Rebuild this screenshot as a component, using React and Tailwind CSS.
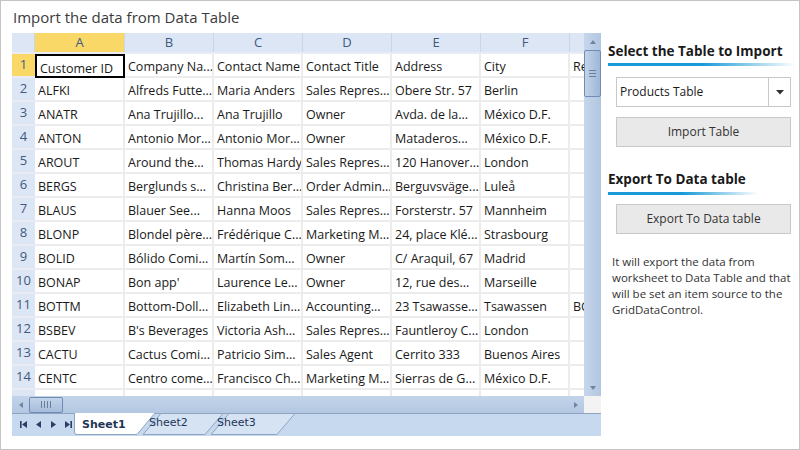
import React from 'react';

const cols = ['A', 'B', 'C', 'D', 'E', 'F'];

const rows = [
  ['Customer ID', 'Company Na...', 'Contact Name', 'Contact Title', 'Address', 'City', 'Re'],
  ['ALFKI', 'Alfreds Futte...', 'Maria Anders', 'Sales Repres...', 'Obere Str. 57', 'Berlin', ''],
  ['ANATR', 'Ana Trujillo...', 'Ana Trujillo', 'Owner', 'Avda. de la...', 'México D.F.', ''],
  ['ANTON', 'Antonio Mor...', 'Antonio Mor...', 'Owner', 'Mataderos...', 'México D.F.', ''],
  ['AROUT', 'Around the...', 'Thomas Hardy', 'Sales Repres...', '120 Hanover...', 'London', ''],
  ['BERGS', 'Berglunds s...', 'Christina Ber...', 'Order Admin...', 'Berguvsväge...', 'Luleå', ''],
  ['BLAUS', 'Blauer See...', 'Hanna Moos', 'Sales Repres...', 'Forsterstr. 57', 'Mannheim', ''],
  ['BLONP', 'Blondel père...', 'Frédérique C...', 'Marketing M...', '24, place Klé...', 'Strasbourg', ''],
  ['BOLID', 'Bólido Comi...', 'Martín Som...', 'Owner', 'C/ Araquil, 67', 'Madrid', ''],
  ['BONAP', "Bon app'", 'Laurence Le...', 'Owner', '12, rue des...', 'Marseille', ''],
  ['BOTTM', 'Bottom-Doll...', 'Elizabeth Lin...', 'Accounting...', '23 Tsawasse...', 'Tsawassen', 'BC'],
  ['BSBEV', "B's Beverages", 'Victoria Ash...', 'Sales Repres...', 'Fauntleroy C...', 'London', ''],
  ['CACTU', 'Cactus Comi...', 'Patricio Sim...', 'Sales Agent', 'Cerrito 333', 'Buenos Aires', ''],
  ['CENTC', 'Centro come...', 'Francisco Ch...', 'Marketing M...', 'Sierras de G...', 'México D.F.', ''],
  ['', '', '', '', '', '', ''],
];

const Tri = ({ dir }) => {
  const d = {
    up: 'M1 5 L4 1 L7 5 Z',
    down: 'M1 1 L4 5 L7 1 Z',
    left: 'M5 1 L1 4 L5 7 Z',
    right: 'M1 1 L5 4 L1 7 Z',
  }[dir];
  const w = dir === 'up' || dir === 'down' ? 8 : 6;
  const h = dir === 'up' || dir === 'down' ? 6 : 8;
  return (
    <svg width={w} height={h} viewBox={`0 0 ${w} ${h}`}>
      <path d={d} fill="#6d84a6" />
    </svg>
  );
};

const NavIcon = ({ type }) => (
  <svg width="9" height="9" viewBox="0 0 9 9">
    {type === 'first' && (<><rect x="1" y="1" width="1.6" height="7" fill="#2a3f63" /><path d="M8 1 L3 4.5 L8 8 Z" fill="#2a3f63" /></>)}
    {type === 'prev' && <path d="M7 1 L2 4.5 L7 8 Z" fill="#2a3f63" />}
    {type === 'next' && <path d="M2 1 L7 4.5 L2 8 Z" fill="#2a3f63" />}
    {type === 'last' && (<><path d="M1 1 L6 4.5 L1 8 Z" fill="#2a3f63" /><rect x="6.4" y="1" width="1.6" height="7" fill="#2a3f63" /></>)}
  </svg>
);

const SheetTab = ({ label, active, width }) => (
  <div className="relative h-[22px] flex items-center" style={{ width }}>
    <svg className="absolute inset-0" width={width + 14} height="22" viewBox={`0 0 ${width + 14} 22`}>
      {active ? (
        <path d={`M0.5 0 L0.5 19 Q0.5 21.5 3 21.5 L${width - 6} 21.5 L${width + 12} 0`} fill="#ffffff" stroke="#8ea4c2" />
      ) : (
        <path d={`M0 21.5 L${width - 6} 21.5 L${width + 12} 0.5 L18 0.5 L0 21.5`} fill="#d6e3f3" stroke="#8ea4c2" />
      )}
    </svg>
    <span className={`relative text-[11px] text-[#1f3556] ${active ? 'font-bold pl-[8px] pt-[3px]' : 'pl-[6px] -mt-[2px]'}`} style={{ fontFamily: '"DejaVu Sans", Verdana, sans-serif' }}>
      {label}
    </span>
  </div>
);

export default function App() {
  return (
    <div className="w-[800px] h-[450px] bg-white border border-[#c4c4c4] box-border overflow-hidden" style={{ fontFamily: '"Open Sans", "Noto Sans", sans-serif' }}>
      <div className="h-[32px] pl-3 pt-[5px] text-[15px] text-[#3b3b3b]">Import the data from Data Table</div>
      <div className="flex">
        {/* spreadsheet */}
        <div className="ml-[11px] w-[589px] shrink-0 flex flex-col">
          <div className="flex h-[363px]">
            <div className="w-[572px] overflow-hidden flex flex-col text-[12.5px] text-[#1a1a1a]">
              {/* column headers */}
              <div className="flex h-[21px] shrink-0 bg-[#dce6f4] border-b-2 border-[#e9edf3] text-[#3f5a80] text-[13px]">
                <div className="w-[23px] shrink-0 border-r border-[#c9d6e8]" />
                {cols.map((c, i) => (
                  <div key={c} className={`shrink-0 flex items-center justify-center border-r border-[#c9d6e8] ${i === 0 ? 'bg-[#fad868] w-[90px]' : 'w-[89px]'}`}>{c}</div>
                ))}
                <div className="w-[20px] shrink-0" />
              </div>
              {rows.map((r, ri) => (
                <div key={ri} className="flex h-[24px] shrink-0">
                  <div className={`w-[23px] shrink-0 text-[#3f5a80] text-[13px] text-center leading-[20px] border-b-2 border-[#e9edf3] ${ri === 0 ? 'bg-[#fad868]' : 'bg-[#dce6f4]'}`}>{ri < 14 ? ri + 1 : ''}</div>
                  {r.map((v, ci) => (
                    <div
                      key={ci}
                      className={`shrink-0 overflow-hidden whitespace-nowrap pl-[3px] pt-[4px] leading-[18px] ${ci === 6 ? 'w-[20px]' : ci === 0 ? 'w-[90px]' : 'w-[89px]'} ${ri === 0 && ci === 0 ? 'border-2 border-black pl-[2px] pt-[2px]' : 'border-b-2 border-r-2 border-[#ececec]'}`}
                    >
                      {v}
                    </div>
                  ))}
                </div>
              ))}
            </div>
            {/* vertical scrollbar */}
            <div className="w-[17px] flex flex-col bg-gradient-to-r from-[#c6d6ec] to-[#b2c6e0]">
              <div className="h-[17px] flex items-center justify-center"><Tri dir="up" /></div>
              <div className="h-[47px] border border-[#6e8cb4] rounded-[2px] bg-gradient-to-r from-[#c3d4ea] to-[#9fb6d6] flex items-center justify-center">
                <div className="flex flex-col gap-[2px]">
                  <div className="w-[7px] h-px bg-[#6a7f9c]" />
                  <div className="w-[7px] h-px bg-[#6a7f9c]" />
                  <div className="w-[7px] h-px bg-[#6a7f9c]" />
                </div>
              </div>
              <div className="flex-1" />
              <div className="h-[17px] flex items-center justify-center"><Tri dir="down" /></div>
            </div>
          </div>
          {/* horizontal scrollbar */}
          <div className="flex h-[17px]">
            <div className="w-[572px] flex items-center bg-gradient-to-b from-[#c3d4ea] to-[#b3c7e1]">
              <div className="w-[17px] flex items-center justify-center"><Tri dir="left" /></div>
              <div className="w-[34px] h-[16px] border border-[#6e8cb4] rounded-[2px] bg-gradient-to-b from-[#c3d4ea] to-[#a6bcda] flex items-center justify-center gap-[2px]">
                <div className="w-px h-[7px] bg-[#6a7f9c]" />
                <div className="w-px h-[7px] bg-[#6a7f9c]" />
                <div className="w-px h-[7px] bg-[#6a7f9c]" />
                <div className="w-px h-[7px] bg-[#6a7f9c]" />
              </div>
              <div className="flex-1" />
              <div className="w-[17px] flex items-center justify-center"><Tri dir="right" /></div>
            </div>
            <div className="w-[17px] bg-[#f3f3f3]" />
          </div>
          {/* sheet tab bar */}
          <div className="h-[23px] bg-[#c6d9ef] border-t border-[#8ea4c2] flex items-start">
            <div className="w-[62px] h-[21px] flex items-center pl-[7px] gap-[6px]">
              <NavIcon type="first" />
              <NavIcon type="prev" />
              <NavIcon type="next" />
              <NavIcon type="last" />
            </div>
            <div className="flex -mt-px">
              <SheetTab label="Sheet1" active width={69} />
              <SheetTab label="Sheet2" width={68} />
              <SheetTab label="Sheet3" width={72} />
            </div>
          </div>
        </div>
        {/* right panel */}
        <div className="w-[198px] shrink-0 pl-[7px]">
          <div className="pt-[9px] text-[13.5px] font-bold text-[#1a1a1a] leading-[18px]">Select the Table to Import</div>
          <div className="mt-[3px] h-[3px] w-[188px] bg-gradient-to-r from-[#1a9ad8] via-[#1a9ad8] to-transparent" />
          <div className="ml-[8px] mt-[11px] w-[175px] h-[30px] border border-[#c8c8c8] flex items-center text-[12px] text-[#1a1a1a]">
            <div className="flex-1 pl-[3px]">Products Table</div>
            <div className="w-[22px] h-full border-l border-[#c8c8c8] flex items-center justify-center">
              <svg width="8" height="5" viewBox="0 0 8 5"><path d="M0 0 L8 0 L4 4.5 Z" fill="#333" /></svg>
            </div>
          </div>
          <div className="ml-[8px] mt-[10px] w-[175px] h-[30px] border border-[#c8c8c8] bg-[#e9e9e9] flex items-center justify-center text-[12px] text-[#333]">Import Table</div>
          <div className="mt-[23px] text-[13.5px] font-bold text-[#1a1a1a] leading-[18px]">Export To Data table</div>
          <div className="mt-[4px] h-[3px] w-[150px] bg-gradient-to-r from-[#1a9ad8] via-[#1a9ad8] to-transparent" />
          <div className="ml-[8px] mt-[9px] w-[175px] h-[30px] border border-[#c8c8c8] bg-[#e9e9e9] flex items-center justify-center text-[12px] text-[#333]">Export To Data table</div>
          <div className="ml-[4px] mt-[20px] w-[184px] text-[11.5px] leading-[16px] text-[#333]">
            It will export the data from worksheet to Data Table and that will be set an item source to the GridDataControl.
          </div>
        </div>
      </div>
    </div>
  );
}
